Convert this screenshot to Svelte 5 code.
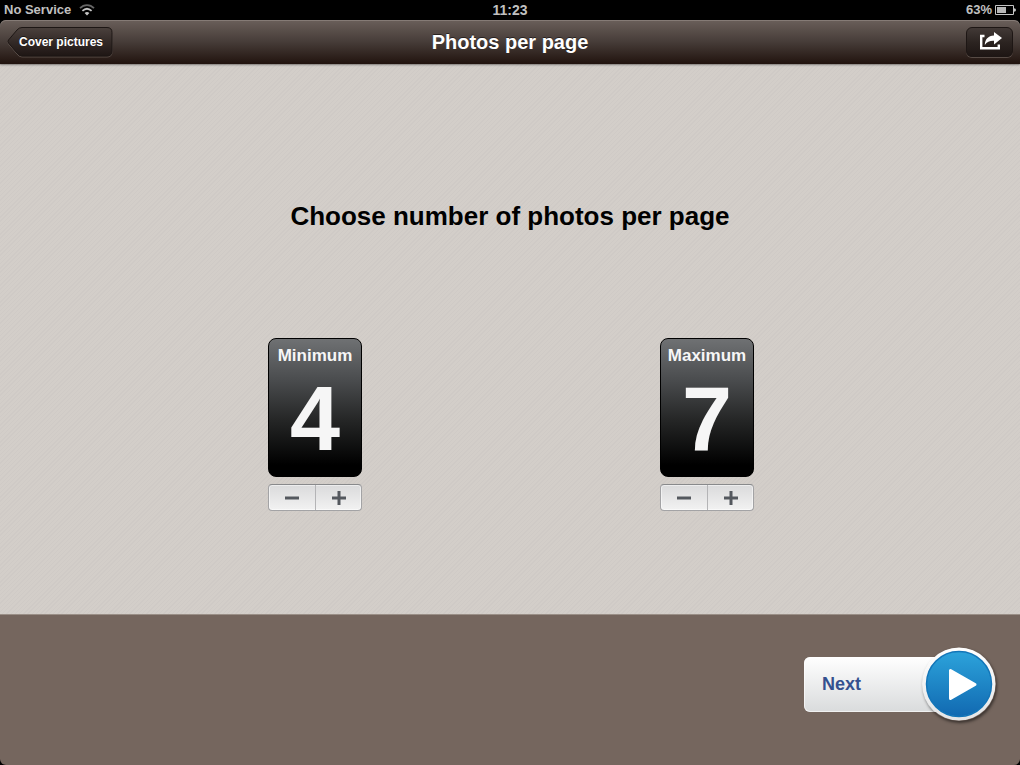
<script>
	let min = $state(4);
	let max = $state(7);

	function setMin(n) {
		if (n >= 1 && n <= max) min = n;
	}

	function setMax(n) {
		if (n >= min && n <= 9) max = n;
	}
</script>

{#snippet picker(label, value, set)}
	<div class="picker" role="group" aria-label={label}>
		<div class="card">
			<span class="label">{label}</span>
			<output class="value">{value}</output>
		</div>
		<div class="stepper">
			<button aria-label="Decrease {label}" onclick={() => set(value - 1)}>
				<svg width="14" height="14" viewBox="0 0 14 14">
					<path d="M0 5.5h14v3H0z" fill="#54585e" />
				</svg>
			</button>
			<button aria-label="Increase {label}" onclick={() => set(value + 1)}>
				<svg width="14" height="14" viewBox="0 0 14 14">
					<path d="M0 5.5h5.5V0h3v5.5H14v3H8.5V14h-3V8.5H0z" fill="#54585e" />
				</svg>
			</button>
		</div>
	</div>
{/snippet}

<div class="screen">
	<div class="status">
		<div class="carrier">
			<span>No Service</span>
			<svg width="16" height="12" viewBox="0 0 16 12" fill="none">
				<path d="M1 4.2C5 .1 11 .1 15 4.2" stroke="#666" stroke-width="1.8" />
				<path d="M3.4 6.9C6.2 4.2 9.8 4.2 12.6 6.9" stroke="#c4c4c4" stroke-width="1.8" />
				<path d="M5.6 9.1Q8 7 10.4 9.1L8 11.6z" fill="#c4c4c4" />
			</svg>
		</div>
		<span class="time">11:23</span>
		<div class="battery">
			<span>63%</span>
			<svg width="21" height="10" viewBox="0 0 21 10">
				<path d="M.5.5h18v9H.5z" fill="none" stroke="#c4c4c4" />
				<path d="M19 3.2q2 0 2 1.8t-2 1.8z" fill="#c4c4c4" />
				<path d="M2 2h9v6H2z" fill="#b8b8b8" />
			</svg>
		</div>
	</div>

	<header>
		<button class="back">
			<svg width="106" height="31" viewBox="0 0 106 31">
				<defs>
					<linearGradient id="back-fill" x1="0" y1="0" x2="0" y2="1">
						<stop offset="0" stop-color="#4b413d" />
						<stop offset=".5" stop-color="#332a27" />
						<stop offset="1" stop-color="#1e1614" />
					</linearGradient>
				</defs>
				<path d="M15 1.5H100q5 0 5 5V25q0 5-5 5H15q-3 0-5-3L1.5 17q-1-1.5 0-3L10 4q2-2.500 5-2.500z" fill="none" stroke="#6a5e59" stroke-opacity=".7" />
				<path d="M15 .5H100q5 0 5 5V24q0 5-5 5H15q-3 0-5-3L1.5 16q-1-1.5 0-3L10 3q2-2.500 5-2.500z" fill="url(#back-fill)" stroke="#1d1614" />
			</svg>
			<span>Cover pictures</span>
		</button>
		<h1>Photos per page</h1>
		<button class="share" aria-label="Share">
			<svg width="24" height="20" viewBox="0 0 24 20">
				<path d="M6.500 4H3.200V16.300H20.800V12.500" fill="none" stroke="#fff" stroke-width="2.400" />
				<path d="M16 0 24 6 16 12.500V8.800C12 8.600 9 9.800 6.800 13 7 7.500 10 3.900 16 3.600z" fill="#fff" />
			</svg>
		</button>
	</header>

	<main>
		<h2>Choose number of photos per page</h2>
		<div class="pickers">
			{@render picker('Minimum', min, setMin)}
			{@render picker('Maximum', max, setMax)}
		</div>
	</main>

	<footer>
		<button class="next">
			<span>Next</span>
			<svg width="74" height="74" viewBox="0 0 74 74">
				<defs>
					<linearGradient id="next-fill" x1="0" y1="0" x2="0" y2="1">
						<stop offset="0" stop-color="#2ca3db" />
						<stop offset="1" stop-color="#1169b1" />
					</linearGradient>
					<linearGradient id="next-ring" x1="0" y1="0" x2="0" y2="1">
						<stop offset="0" stop-color="#fff" />
						<stop offset="1" stop-color="#e4e5e6" />
					</linearGradient>
				</defs>
				<circle cx="37" cy="37" r="36.5" fill="url(#next-ring)" />
				<circle cx="37" cy="37" r="32.5" fill="url(#next-fill)" stroke="#1275b8" stroke-width="1.5" />
				<path d="M28.500 23.500V51.500L53 37.500z" fill="#fff" stroke="#fff" stroke-width="3" stroke-linejoin="round" />
			</svg>
		</button>
	</footer>
</div>

<style>
	:global(body) {
		background: #000;
	}

	.screen {
		min-height: 100vh;
		display: flex;
		flex-direction: column;
		font-family: "Liberation Sans", Arial, sans-serif;
		font-weight: bold;
	}

	button {
		margin: 0;
		padding: 0;
		border: none;
		background: none;
		font: inherit;
		color: inherit;
		cursor: pointer;
	}

	svg {
		display: block;
	}

	.status {
		height: 20px;
		padding: 0 4px;
		display: grid;
		grid-template-columns: 1fr auto 1fr;
		align-items: center;
		font-size: 13px;
		line-height: 20px;
		color: #c0c0c0;
		background: #000;
	}

	.carrier {
		display: flex;
		align-items: center;
		gap: 8px;
	}

	.time {
		font-size: 14px;
	}

	.battery {
		display: flex;
		align-items: center;
		justify-content: flex-end;
		gap: 3px;
	}

	header {
		height: 44px;
		padding: 0 7px;
		box-sizing: border-box;
		display: grid;
		grid-template-columns: 1fr auto 1fr;
		align-items: center;
		color: #fff;
		border-radius: 6px 6px 0 0;
		background: linear-gradient(#6a5f5a, #463c38 50%, #21130e);
		box-shadow: inset 0 1px #857b76, 0 1px 2px rgba(0, 0, 0, 0.4);
		z-index: 1;
	}

	h1 {
		margin: 0;
		font-size: 20px;
		line-height: 24px;
		text-shadow: 0 -1px rgba(0, 0, 0, 0.5);
	}

	.back {
		justify-self: start;
		display: grid;
		align-items: center;
		font-size: 12px;
		line-height: 16px;
		text-shadow: 0 -1px rgba(0, 0, 0, 0.6);
	}

	.back > * {
		grid-area: 1 / 1;
	}

	.back span {
		padding-left: 2px;
	}

	.share {
		justify-self: end;
		width: 47px;
		height: 30px;
		display: grid;
		place-items: center;
		border: 1px solid #1d1614;
		border-radius: 6px;
		background: linear-gradient(#423936, #2c2421 50%, #1e1614);
		box-shadow: 0 1px rgba(106, 94, 89, 0.7);
	}

	main {
		flex: 1;
		padding: 137px 20px 103px;
		display: flex;
		flex-direction: column;
		align-items: center;
		gap: 107px;
		background:
			repeating-linear-gradient(135deg, #cfcac6 0 1px, #d3cec9 1px 3px);
	}

	h2 {
		margin: 0;
		font-size: 26px;
		line-height: 30px;
		text-align: center;
		color: #000;
	}

	.pickers {
		width: 100%;
		max-width: 784px;
		padding-left: 2px;
		display: grid;
		grid-template-columns: 1fr 1fr;
		justify-items: center;
	}

	.picker {
		width: 94px;
		display: flex;
		flex-direction: column;
		gap: 7px;
	}

	.card {
		height: 139px;
		padding-top: 7px;
		box-sizing: border-box;
		display: flex;
		flex-direction: column;
		align-items: center;
		color: #f6f6f6;
		border: 1px solid #000;
		border-radius: 8px;
		background: linear-gradient(#6f7173, #4a4c4e 30%, #242525 60%, #000 92%);
	}

	.label {
		font-size: 17px;
		line-height: 20px;
	}

	.value {
		font-size: 90px;
		line-height: 106px;
	}

	.stepper {
		height: 27px;
		box-sizing: border-box;
		display: grid;
		grid-template-columns: 1fr 1fr;
		border: 1px solid #a3a3a5;
		border-top-color: #88898b;
		border-radius: 4px;
		background: linear-gradient(#dadadb, #f2f2f2);
		box-shadow: inset 0 0 0 1px rgba(255, 255, 255, 0.5);
	}

	.stepper button {
		display: grid;
		place-items: center;
	}

	.stepper button + button {
		border-left: 1px solid #b4b4b6;
	}

	footer {
		height: 151px;
		padding: 0 24px 12px;
		box-sizing: border-box;
		display: flex;
		align-items: center;
		justify-content: flex-end;
		border-top: 1px solid #9a8f87;
		border-radius: 0 0 6px 6px;
		background: #75665e;
	}

	.next {
		display: flex;
		align-items: center;
		font-size: 18px;
		color: #34508f;
	}

	.next span {
		width: 156px;
		height: 55px;
		padding-left: 18px;
		box-sizing: border-box;
		line-height: 55px;
		text-align: left;
		border-radius: 6px;
		background: linear-gradient(#fff, #d9dbdc);
		box-shadow: inset 0 0 0 1px rgba(255, 255, 255, 0.6);
	}

	.next svg {
		margin-left: -38px;
		border-radius: 50%;
		box-shadow: 1px 2px 3px rgba(0, 0, 0, 0.5);
	}
</style>
